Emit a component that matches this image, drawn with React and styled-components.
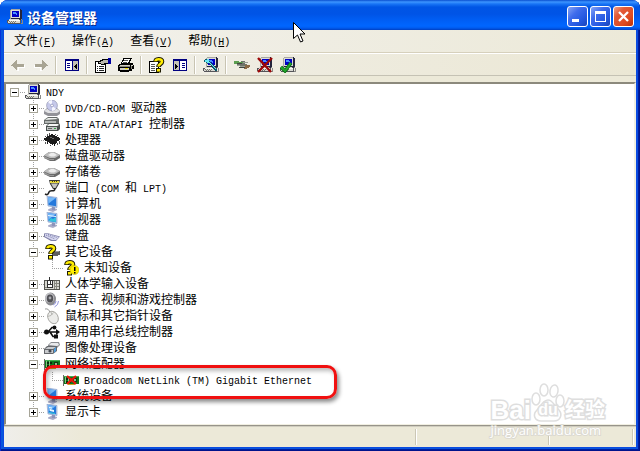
import React, { useState } from 'react';
import styled, { createGlobalStyle, css } from 'styled-components';

const GlobalStyle = createGlobalStyle`
  * {
    box-sizing: border-box;
  }
  body {
    margin: 0;
    background: #fff;
    color: #000;
    font: 12px/16px "Liberation Mono", "Noto Sans CJK SC", monospace;
  }
  button {
    padding: 0;
    border: 0;
    background: none;
    color: inherit;
    font: inherit;
  }
  ul {
    margin: 0;
    padding: 0;
    list-style: none;
  }
`;

const dotsDown = 'repeating-linear-gradient(180deg, #a0a0a0 0 1px, transparent 1px 2px)';
const dotsRight = 'repeating-linear-gradient(90deg, #a0a0a0 0 1px, transparent 1px 2px)';

const Window = styled.div`
  position: relative;
  display: flex;
  flex-direction: column;
  min-height: 100vh;
  padding: 0 4px 4px;
  border-radius: 8px 8px 0 0;
  overflow: hidden;
  background: #0b4be0;
  box-shadow: inset 1px 0 #0831d9, inset -1px -1px #00138c, inset -2px -2px #001ea0,
    inset 3px -3px #0855dd;
`;

const TitleBar = styled.header`
  display: flex;
  align-items: center;
  gap: 4px;
  height: 30px;
  margin: 0 -4px;
  padding: 3px 6px 0 7px;
  background: linear-gradient(
    180deg,
    #0a4fd0 0,
    #3d95ff 2px,
    #1874f5 4px,
    #0055e5 7px,
    #0054e6 14px,
    #005ef4 20px,
    #0066ff 26px,
    #005bef 28px,
    #003fc0 30px
  );
`;

const Title = styled.h1`
  flex: 1;
  margin: 0;
  color: #fff;
  font: bold 14px/20px "Noto Sans CJK SC", sans-serif;
  text-shadow: 1px 1px #0a2a8c;
`;

const Controls = styled.div`
  display: flex;
  gap: 2px;
`;

const ControlButton = styled.button`
  display: grid;
  place-items: center;
  width: 21px;
  height: 21px;
  border: 1px solid #fff;
  border-radius: 3px;
  background: ${({ $close }) =>
    $close
      ? 'linear-gradient(135deg, #f0a088 0, #e35a38 30%, #dd4a20 70%, #b93008 100%)'
      : 'linear-gradient(135deg, #86a4f5 0, #3f6cec 35%, #2458e0 70%, #1a44b8 100%)'};
`;

const MenuBar = styled.nav`
  display: flex;
  height: 24px;
  padding: 0 2px;
  border-bottom: 1px solid #fff;
  background: linear-gradient(90deg, #f2f1ed, #ece9d8);
  box-shadow: inset 0 -1px #d6d0bc;
`;

const MenuItem = styled.button`
  padding: 2px 8px 0;
  white-space: nowrap;
`;

const Latin = styled.span`
  font-size: 10px;
`;

const Key = styled.u`
  text-underline-offset: 1px;
`;

const ToolBar = styled.div`
  display: flex;
  align-items: center;
  height: 22px;
  padding: 0 2px;
  border-bottom: 1px solid #c5c2b4;
  background: linear-gradient(90deg, #f1f0ea, #ebe7d4);
`;

const ToolButton = styled.button`
  display: grid;
  place-items: center;
  width: 23px;
  height: 20px;
`;

const Separator = styled.span`
  width: 2px;
  height: 18px;
  margin: 0 3px;
  border-left: 1px solid #c8c4b2;
  border-right: 1px solid #fff;
`;

const Client = styled.main`
  display: flex;
  flex: 1;
  padding-top: 6px;
  background: #ece9d8;
`;

const TreePanel = styled.div`
  flex: 1;
  padding-bottom: 3px;
  border: 2px solid #f1efe2;
  border-top-color: #8c897c;
  border-left-color: #8c897c;
  border-bottom: 1px solid #f1efe2;
  background: #fff;
`;

const Branch = styled.ul`
  padding-left: ${({ $root }) => ($root ? '4px' : '19px')};
`;

const Node = styled.li`
  ${({ $root, $last }) =>
    !$root &&
    css`
      background: ${dotsDown} 4px 0 / 1px ${$last ? '8px' : '100%'} no-repeat;
    `}
`;

const Row = styled.div`
  position: relative;
  display: flex;
  align-items: center;
  height: 16px;
  white-space: nowrap;
`;

const Gutter = styled.span`
  display: flex;
  align-items: center;
  width: 15px;
  height: 16px;
  background: ${dotsRight} 4px 8px / 11px 1px no-repeat;
`;

const Toggle = styled.button`
  width: 9px;
  height: 9px;
  border: 1px solid #a6a497;
  background:
    linear-gradient(#000, #000) center / 5px 1px no-repeat,
    ${({ $open }) => !$open && 'linear-gradient(#000, #000) center / 1px 5px no-repeat,'}
    #fff;
`;

const Label = styled.span`
  padding: 2px 0 0 5px;
`;

const Highlight = styled.span`
  position: absolute;
  z-index: 1;
  top: -7px;
  left: -5px;
  width: 294px;
  height: 34px;
  border: 3px solid #f01010;
  border-radius: 10px;
  box-shadow: 2px 3px 4px #0007, inset 2px 3px 4px #0004;
  pointer-events: none;
`;

const StatusBar = styled.footer`
  display: flex;
  height: 22px;
  padding: 3px 2px 2px 0;
  border-top: 1px solid #97948a;
  background: linear-gradient(90deg, #efeeea, #ece9d8 80px);
  box-shadow: inset 0 1px #d0cdbf;
`;

const StatusPane = styled.span`
  flex: ${({ $width }) => ($width ? `0 0 ${$width}px` : '1')};
  border-right: 1px solid #fff;
  box-shadow: inset -1px 0 #cbc7b5;
`;

const Pointer = styled.svg`
  position: absolute;
  top: 22px;
  left: 293px;
`;

const Watermark = styled.div`
  position: absolute;
  right: 35px;
  bottom: 13px;
  color: #fff;
  white-space: nowrap;
  pointer-events: none;
`;

const Brand = styled.div`
  display: flex;
  align-items: flex-end;
  height: 40px;
`;

const BrandText = styled.span`
  font: bold ${({ $size }) => $size}px/24px "Liberation Sans", "Noto Sans CJK SC", sans-serif;
  -webkit-text-stroke: 3px #dedede;
  paint-order: stroke fill;
`;

const Paw = styled.span`
  display: grid;
  width: 34px;
  height: 40px;

  > * {
    grid-area: 1 / 1;
  }
  > span {
    align-self: end;
    justify-self: center;
  }
`;

const Site = styled.div`
  font: 13px/16px "Open Sans", sans-serif;
  -webkit-text-stroke: 2px #dcdad2;
  paint-order: stroke fill;
`;

const Icon = ({ children, smooth }) => (
  <svg
    width="16"
    height="16"
    viewBox="0 0 16 16"
    shapeRendering={smooth ? 'auto' : 'crispEdges'}
    aria-hidden="true"
  >
    {children}
  </svg>
);

const PcShape = () => (
  <>
    <path d="M4 0h10v1h1v9h-1v1H3V1h1z" fill="#24243c" />
    <path d="M4 0h9v1H4zM3 1h1v9H3z" fill="#a8a8a2" />
    <path d="M4 1h9v8H4z" fill="#dcdcd6" />
    <path d="M5 2h7v6H5z" fill="#0000c4" />
    <path d="M6 3h3v1h1v2H9V5H6z" fill="#4890ff" />
    <path d="M2 10h11v1h1v4H1v-1H0v-3h2z" fill="#55555a" />
    <path d="M2 10h10v1H2zM1 12h12v2H1z" fill="#d8d8d2" />
    <path d="M2 11h11v1H2z" fill="#f8f8f4" />
    <path d="M2 12h1v1H2zM4 12h1v1H4zM6 12h1v1H6zM8 12h1v1H8zM3 13h1v1H3zM5 13h1v1H5zM7 13h1v1H7z" fill="#77776f" />
    <path d="M14 10h1v1h1v4h-2v-1h1v-3h-1z" fill="#8a8a86" />
  </>
);

const PcIcon = () => (
  <Icon>
    <PcShape />
  </Icon>
);

const ArrowIcon = ({ flip }) => (
  <Icon>
    <g transform={flip ? 'translate(16) scale(-1 1)' : undefined}>
      <path d="M3 9h1v1h1v1h1v1h1v2h2v-3h6V8H8v5z" fill="#fff" />
      <path d="M1 8h1V7h1V6h1V5h1V4h1V3h1v4h7v3H7v3H6v-1H5v-1H4v-1H3V9H1z" fill="#a9a594" />
    </g>
  </Icon>
);

const PaneIcon = ({ flip }) => (
  <Icon>
    <path d="M1 2h14v12H1z" fill="#000080" />
    <path d="M2 4h12v9H2z" fill="#fff" />
    <g transform={flip ? 'translate(16) scale(-1 1)' : undefined}>
      <path d="M8 4h6v9H8z" fill="#c6c3b6" />
      <path d="M8 4h1v9H8z" fill="#000080" />
      <path d="M3 6h3v1H3zM3 8h3v1H3zM3 10h3v1H3z" fill="#000080" />
      <path d="M10 9h1V8h1V7h1v5h-1v-1h-1v-1h-1z" fill="#000" />
    </g>
  </Icon>
);

const PropertiesIcon = () => (
  <Icon>
    <path d="M0 4h11v12H0z" fill="#000" />
    <path d="M1 5h9v10H1z" fill="#fff" />
    <path d="M2 9h1v1H2zM4 9h5v1H4zM2 11h1v1H2zM4 11h5v1H4zM2 13h1v1H2zM4 13h5v1H4z" fill="#222" />
    <path d="M3 4h2V3h2V2h6v5h-3v1H6V7H3z" fill="#000" />
    <path d="M4 5h2V4h2V3h5v3H9v1H6V6H4z" fill="#b9b8ad" />
    <path d="M13 1h3v6h-3z" fill="#0000a0" />
  </Icon>
);

const PrinterIcon = () => (
  <Icon>
    <path d="M5 1h9v1h-1v2h-1v2h3v2h1v4h-2v2h-3v1H2v-1H0V8h1V7h2V5h1V3h1z" fill="#000" />
    <path d="M6 2h6v1h-1v2h-1v1H4V5h1V4h1z" fill="#fff" />
    <path d="M6 3h4v1H6zM5 5h4v1H5z" fill="#555" />
    <path d="M2 8h10v1H2zM2 11h9v2H2zM13 8h2v1h-2z" fill="#d0cec2" />
    <path d="M1 9h11v1H1zM13 9h1v3h-1z" fill="#8a887e" />
    <path d="M7 11h3v1H7z" fill="#f0e000" />
  </Icon>
);

const QuestionShape = () => (
  <g fill="none" shapeRendering="auto">
    <path d="M6.500 5C6.500 1.500 13 1.500 13 4.500 13 7 9.500 7 9.500 10" stroke="#1c1a00" strokeWidth="4.600" />
    <path d="M7 11h5v4.500H7z" fill="#1c1a00" />
    <path d="M6.500 4.300C6.500 1.500 13 1.500 13 4.500 13 7 9.500 7 9.500 9.500" stroke="#ffec00" strokeWidth="2.600" />
    <path d="M8 12h3v2.500H8z" fill="#ffec00" />
  </g>
);

const HelpIcon = () => (
  <Icon>
    <path d="M0 4h10v12H0z" fill="#000" />
    <path d="M1 5h8v10H1z" fill="#fff" />
    <path d="M2 7h4v1H2zM2 9h4v1H2zM2 11h4v1H2zM2 13h4v1H2z" fill="#555" />
    <QuestionShape />
  </Icon>
);

const ScanIcon = () => (
  <Icon>
    <PcShape />
    <path d="M2 2h3v1h1v1h1v1h1v1h1v1h1v1h1v1h1v2h1v1h1v2h-2v-1h-1v-1h-1v-1H9V9H8V8H7V7H6V6H5v1H4V6H3V5H1V3h1z" fill="#11596c" />
    <path d="M2 3h2v2H2zM4 2h2v2H4zM4 4h2v2H4zM6 5h1v1H6zM7 6h1v1H7zM8 7h1v1H8zM9 8h1v1H9zM10 9h1v1h-1zM11 10h1v1h-1zM12 11h1v1h-1z" fill="#67e8f4" />
  </Icon>
);

const UninstallIcon = () => (
  <Icon>
    <path d="M1 4h4v1h2V4h4v1h3v1h-3v1h2v1h2v1h-2v1H9V9H6V8H3V7h3V6H1z" fill="#6f756b" />
    <path d="M0 4h5v1h5v1H4v1H0z" fill="#5b9e50" />
    <path d="M9 5h5v1H9zM3 8h3v1h5v1H6V9H3z" fill="#9aa096" />
    <path d="M3 6h5v1H3zM5 10h6v1H5z" fill="#41463f" />
    <path d="M11 8h5v2h-1v1h-2v1h-3v-1h1z" fill="#8b6b47" />
  </Icon>
);

const DisableIcon = () => (
  <Icon>
    <PcShape />
    <path d="M1 1l13 14M15 1L1 15" stroke="#9c0808" strokeWidth="2.400" shapeRendering="auto" />
  </Icon>
);

const EnableIcon = () => (
  <Icon>
    <PcShape />
    <path d="M1 10l4 4 6-8" fill="none" stroke="#066b0e" strokeWidth="3.400" shapeRendering="auto" />
    <path d="M1 10l4 4 6-8" fill="none" stroke="#21a52c" strokeWidth="2" shapeRendering="auto" />
  </Icon>
);

const DvdIcon = () => (
  <Icon smooth>
    <path d="M0 11l3-3h10l3 3v3l-3 2H4l-4-2z" fill="#929298" />
    <path d="M0 11l3-2h10l3 2-3 2H4z" fill="#e2e2e5" />
    <circle cx="8" cy="5.500" r="5.400" fill="#c6c9ea" stroke="#9495b0" strokeWidth=".7" />
    <path d="M8 5.500L4 2a5 5 0 0 1 4-2zM8 5.500l4 3.500a5 5 0 0 1-4 2z" fill="#f6f6ff" />
    <circle cx="8" cy="5.500" r="1.400" fill="#fff" stroke="#8788b5" strokeWidth=".7" />
  </Icon>
);

const IdeIcon = () => (
  <Icon smooth>
    <path d="M0 4l4-3h9l2 2v4l-2 1H0z" fill="#656a68" />
    <path d="M1 4l3-2h8l2 1z" fill="#eef0ee" />
    <path d="M1 5h11v2H1z" fill="#b4b8b6" />
    <path d="M2 10l3-3h10l1 2v4l-2 2H2z" fill="#4a504e" />
    <path d="M3 10l2-2h9l1 1-2 1z" fill="#f4f6f4" />
    <path d="M3 11h10v3H3z" fill="#c4c8c6" />
    <path d="M4 12h4v1H4z" fill="#666" />
    <path d="M10 12h2v1h-2z" fill="#38a048" />
  </Icon>
);

const CpuIcon = () => (
  <Icon>
    <path d="M7 2h2v1h2v1h2v1h2v1h1v2h-1v1h-2v2h-1v1h-1v2h-1v-2H9v1H8v-1H6v-1H5v-1H4v2H3v-3H1V8H0V6h2V5h1V4h2V3h2z" fill="#1c1c1c" />
    <path d="M3 2h1v2H3zM1 4h1v1H1zM5 1h1v2H5zM11 2h1v1h-1zM13 3h1v1h-1zM15 9h1v3h-1zM13 11h1v2h-1zM1 10h1v2H1zM6 13h1v1H6z" fill="#555" />
    <path d="M6 5h2v1H6zM8 6h2v1H8z" fill="#686868" />
  </Icon>
);

const DiskIcon = () => (
  <Icon smooth>
    <path d="M0 7.500L5 4h5l6 3v3l-5 3H6L0 10z" fill="#6a6a6a" />
    <path d="M0 7.500L5 4h5l6 3-5 3H6z" fill="#bcbcbc" />
    <path d="M4 7l3-2h3l3 2-3 1.500H7z" fill="#ededed" />
    <path d="M0 8l6 3h4v1H6l-6-2z" fill="#999" />
  </Icon>
);

const PortIcon = () => (
  <Icon smooth>
    <path d="M5 0h11l-1 4-3 5H9L6 4z" fill="#3a3a38" />
    <path d="M7 3.500h7l-2.500 4.500h-2z" fill="#c5c5c0" />
    <path d="M6 1h9v2H6z" fill="#e8d940" />
    <path d="M8 1h1v1H8zM10 1h1v1h-1zM12 1h1v1h-1z" fill="#4a4500" />
    <path d="M11 8c0 5-5 1-6 4-1 3-2 3-4 2" fill="none" stroke="#222" strokeWidth="1.600" />
  </Icon>
);

const ScreenShape = () => (
  <>
    <path d="M4 13.500l4-2 5 1.500v1l-4 2-5-1.500z" fill="#a9abc8" />
    <path d="M8 10h3v4H8z" fill="#8e94ba" />
    <path d="M3 0l10 1.500v10L4 10z" fill="#b4cbe8" stroke="#8299c8" strokeWidth=".6" />
    <path d="M4 1l8 1.300v8L4.500 9z" fill="#2478dc" />
    <path d="M4 1l7.500 1.200L4.500 7.500z" fill="#76b8f8" />
  </>
);

const ComputerIcon = () => (
  <Icon smooth>
    <ScreenShape />
  </Icon>
);

const MonitorIcon = () => (
  <Icon smooth>
    <ScreenShape />
    <path d="M4 3l8 1v1L4 4z" fill="#e8f6ff" />
    <path d="M5 8l2-2 2 1 3-2v5L5 9z" fill="#33c4dc" />
  </Icon>
);

const DisplayIcon = () => (
  <Icon smooth>
    <ScreenShape />
    <path d="M6 5l4 1v2L6 7zM5 3l3 .5v1L5 4z" fill="#e8f8ff" />
    <path d="M5 8l6 1v1L5 9z" fill="#2ec8dc" />
  </Icon>
);

const KeyboardIcon = () => (
  <Icon smooth>
    <path d="M0 5.500L3 5l13 3.500-4 4.500H7L0 9z" fill="#8081a8" />
    <path d="M1 6l2-.5L15 9l-3 3H8L1 8.500z" fill="#d5d6ee" />
    <path d="M2 7l9 4M4 6.500l9 3" stroke="#7779a8" strokeWidth="1" strokeDasharray="1 1" />
  </Icon>
);

const OtherIcon = () => (
  <Icon>
    <path d="M8 7h8v4h-2v1H8z" fill="#5e5e5e" />
    <path d="M9 7h6v1H9z" fill="#999" />
    <g transform="translate(-3)">
      <QuestionShape />
    </g>
  </Icon>
);

const UnknownIcon = () => (
  <Icon smooth>
    <g transform="translate(-3)">
      <QuestionShape />
    </g>
    <circle cx="11.500" cy="10" r="4.500" fill="#ffee00" stroke="#b4a500" strokeWidth=".5" />
    <path d="M11 7h1.500v4H11zM11 12h1.500v1.500H11z" fill="#000" />
  </Icon>
);

const HidIcon = () => (
  <Icon>
    <path d="M0 4h16v10H0z" fill="#55554f" />
    <path d="M1 5h14v8H1z" fill="#d9d9d2" />
    <path d="M10 5h1v8h-1zM11 7h4v1h-4zM11 10h4v1h-4zM12 5h1v8h-1zM1 11h2v1H1z" fill="#888880" />
    <path d="M5 1h1v3H5zM3 4h6v8H3z" fill="#333" />
    <path d="M4 5h2v3H4zM7 5h1v3H7zM4 9h4v2H4z" fill="#fff" />
  </Icon>
);

const SoundIcon = () => (
  <Icon smooth>
    <ellipse cx="6.500" cy="7" rx="5.500" ry="6.500" fill="#8d8d91" />
    <ellipse cx="5.500" cy="6" rx="4.500" ry="5" fill="#c0c0c4" />
    <ellipse cx="6" cy="6.500" rx="3.200" ry="4" fill="#505055" />
    <circle cx="6" cy="6" r="1.400" fill="#aaaab0" />
    <path d="M9 13q3-1 3-4M10.500 15q4-2 4-6" fill="none" stroke="#9295dc" strokeWidth="1" />
  </Icon>
);

const MouseIcon = () => (
  <Icon smooth>
    <path d="M1 1q4-1 5 4" fill="none" stroke="#999" />
    <ellipse cx="9" cy="9.500" rx="5" ry="6.500" transform="rotate(-28 9 9.500)" fill="#ececea" stroke="#9d9c98" strokeWidth=".8" />
    <path d="M3.500 8.500q4 0 6-4M7 4l1 3" fill="none" stroke="#a5a5a0" strokeWidth=".7" />
  </Icon>
);

const UsbIcon = () => (
  <Icon smooth>
    <path d="M2 8h12M4 8l4-4.500h3M6 8l3 4.500h3" fill="none" stroke="#111" strokeWidth="1.600" />
    <circle cx="2.500" cy="8" r="2.500" fill="#111" />
    <path d="M12 5l4 3-4 3z" fill="#111" />
    <circle cx="10.500" cy="3.500" r="1.900" fill="#111" />
    <path d="M10 10.500h4v4h-4z" fill="#111" />
  </Icon>
);

const ImagingIcon = () => (
  <Icon smooth>
    <path d="M4 5l3-3h8l1 3-3 3H4z" fill="#8a8c90" />
    <path d="M5 5l2-2h7l1 2-2 1z" fill="#e9eaec" />
    <path d="M0 9l3-3h10v5l-4 3H0z" fill="#66686c" />
    <path d="M1 9l3-2h8L9 9zM1 10h8v3H1z" fill="#c8cacd" />
    <circle cx="6" cy="11" r="1.600" fill="#444850" />
    <path d="M10 9l2-2v4l-2 2z" fill="#4c9cdc" />
  </Icon>
);

const CardShape = () => (
  <>
    <path d="M0 3h1v11H0z" fill="#6b6b66" />
    <path d="M1 4h15v8H1z" fill="#0c7a1c" />
    <path d="M1 4h15v1H1z" fill="#42b054" />
    <path d="M3 6h2v2H3zM6 6h2v2H6zM3 9h2v2H3zM6 9h2v2H6z" fill="#082c0c" />
    <path d="M10 6h4v4h-4z" fill="#123816" />
    <path d="M11 7h2v2h-2zM2 5h1v6H2zM5 5h1v6H5z" fill="#8cc088" />
    <path d="M5 12h7v1H5z" fill="#cfa820" />
  </>
);

const NetworkIcon = () => (
  <Icon>
    <CardShape />
  </Icon>
);

const NicDisabledIcon = () => (
  <Icon>
    <CardShape />
    <path d="M4 4l9 8M13 4l-9 8" stroke="#f01408" strokeWidth="2.200" shapeRendering="auto" />
  </Icon>
);

const deviceTree = {
  label: 'NDY',
  icon: PcIcon,
  children: [
    { label: 'DVD/CD-ROM 驱动器', icon: DvdIcon, children: [] },
    { label: 'IDE ATA/ATAPI 控制器', icon: IdeIcon, children: [] },
    { label: '处理器', icon: CpuIcon, children: [] },
    { label: '磁盘驱动器', icon: DiskIcon, children: [] },
    { label: '存储卷', icon: DiskIcon, children: [] },
    { label: '端口 (COM 和 LPT)', icon: PortIcon, children: [] },
    { label: '计算机', icon: ComputerIcon, children: [] },
    { label: '监视器', icon: MonitorIcon, children: [] },
    { label: '键盘', icon: KeyboardIcon, children: [] },
    {
      label: '其它设备',
      icon: OtherIcon,
      open: true,
      children: [{ label: '未知设备', icon: UnknownIcon }],
    },
    { label: '人体学输入设备', icon: HidIcon, children: [] },
    { label: '声音、视频和游戏控制器', icon: SoundIcon, children: [] },
    { label: '鼠标和其它指针设备', icon: MouseIcon, children: [] },
    { label: '通用串行总线控制器', icon: UsbIcon, children: [] },
    { label: '图像处理设备', icon: ImagingIcon, children: [] },
    {
      label: '网络适配器',
      icon: NetworkIcon,
      open: true,
      children: [
        {
          label: 'Broadcom NetLink (TM) Gigabit Ethernet',
          icon: NicDisabledIcon,
          highlighted: true,
        },
      ],
    },
    { label: '系统设备', icon: ComputerIcon, children: [] },
    { label: '显示卡', icon: DisplayIcon, children: [] },
  ],
  open: true,
};

const menus = [
  { label: '文件', shortcut: 'F' },
  { label: '操作', shortcut: 'A' },
  { label: '查看', shortcut: 'V' },
  { label: '帮助', shortcut: 'H' },
];

const toolGroups = [
  [
    { name: '后退', icon: <ArrowIcon /> },
    { name: '前进', icon: <ArrowIcon flip /> },
  ],
  [{ name: '显示/隐藏控制台树', icon: <PaneIcon /> }],
  [
    { name: '属性', icon: <PropertiesIcon /> },
    { name: '打印', icon: <PrinterIcon /> },
  ],
  [
    { name: '帮助', icon: <HelpIcon /> },
    { name: '显示/隐藏操作窗格', icon: <PaneIcon flip /> },
  ],
  [{ name: '扫描检测硬件改动', icon: <ScanIcon /> }],
  [
    { name: '卸载', icon: <UninstallIcon /> },
    { name: '停用', icon: <DisableIcon /> },
    { name: '启用', icon: <EnableIcon /> },
  ],
];

// half-width runs are set smaller so that two of them fill one Chinese character
const MixedText = ({ text }) =>
  text
    .split(/([\x20-\x7e]+)/)
    .filter(Boolean)
    .map((run, i) => (/^[\x20-\x7e]/.test(run) ? <Latin key={i}>{run}</Latin> : run));

const TreeNode = ({ node, root, last }) => {
  const [open, setOpen] = useState(!!node.open);
  const NodeIcon = node.icon;

  return (
    <Node $root={root} $last={last}>
      <Row>
        <Gutter>
          {node.children && (
            <Toggle
              $open={open}
              aria-label={node.label}
              aria-expanded={open}
              onClick={() => setOpen(!open)}
            />
          )}
        </Gutter>
        <NodeIcon />
        <Label>
          <MixedText text={node.label} />
        </Label>
        {node.highlighted && <Highlight />}
      </Row>
      {open && node.children && (
        <Branch>
          {node.children.map((child, i) => (
            <TreeNode key={child.label} node={child} last={i === node.children.length - 1} />
          ))}
        </Branch>
      )}
    </Node>
  );
};

const App = () => (
  <Window>
    <GlobalStyle />
    <TitleBar>
      <PcIcon />
      <Title>设备管理器</Title>
      <Controls>
        <ControlButton aria-label="最小化">
          <svg width="19" height="19" shapeRendering="crispEdges">
            <path d="M4 12h7v3H4z" fill="#fff" />
          </svg>
        </ControlButton>
        <ControlButton aria-label="最大化">
          <svg width="19" height="19" shapeRendering="crispEdges">
            <path d="M4 4h11v11H4zM5 7v7h9V7z" fill="#fff" fillRule="evenodd" />
          </svg>
        </ControlButton>
        <ControlButton $close aria-label="关闭">
          <svg width="19" height="19">
            <path d="M5 5l9 9M14 5l-9 9" stroke="#fff" strokeWidth="2.300" />
          </svg>
        </ControlButton>
      </Controls>
    </TitleBar>
    <MenuBar>
      {menus.map(({ label, shortcut }) => (
        <MenuItem key={shortcut}>
          {label}
          <Latin>
            (<Key>{shortcut}</Key>)
          </Latin>
        </MenuItem>
      ))}
    </MenuBar>
    <ToolBar>
      {toolGroups.map((group, i) => (
        <React.Fragment key={i}>
          {i > 0 && <Separator />}
          {group.map(({ name, icon }) => (
            <ToolButton key={name} aria-label={name}>
              {icon}
            </ToolButton>
          ))}
        </React.Fragment>
      ))}
    </ToolBar>
    <Client>
      <TreePanel>
        <Branch $root>
          <TreeNode node={deviceTree} root />
        </Branch>
      </TreePanel>
    </Client>
    <StatusBar>
      <StatusPane />
      <StatusPane $width={133} />
      <StatusPane $width={84} />
    </StatusBar>
    <Pointer width="12" height="21" viewBox="0 0 12 21">
      <path d="M.5.500v16l4-3.500 3 7 2.500-1-3-7h5z" fill="#fff" stroke="#000" />
    </Pointer>
    <Watermark>
      <Brand>
        <BrandText $size={26}>Bai</BrandText>
        <Paw>
          <svg width="34" height="40" fill="#fff" stroke="#dedede" strokeWidth="1.500">
            <ellipse cx="5" cy="17" rx="4" ry="6" />
            <ellipse cx="13" cy="8" rx="4" ry="6" />
            <ellipse cx="23" cy="9" rx="4" ry="6" transform="rotate(10 23 9)" />
            <ellipse cx="29" cy="19" rx="4" ry="6" />
            <path d="M17 18c5 0 6 6 11 10 4 5 1 11-5 11H10c-6 0-9-6-4-11 4-4 6-10 11-10z" />
          </svg>
          <BrandText $size={16}>du</BrandText>
        </Paw>
        <BrandText $size={20}>经验</BrandText>
      </Brand>
      <Site>jingyan.baidu.com</Site>
    </Watermark>
  </Window>
);

export default App;
